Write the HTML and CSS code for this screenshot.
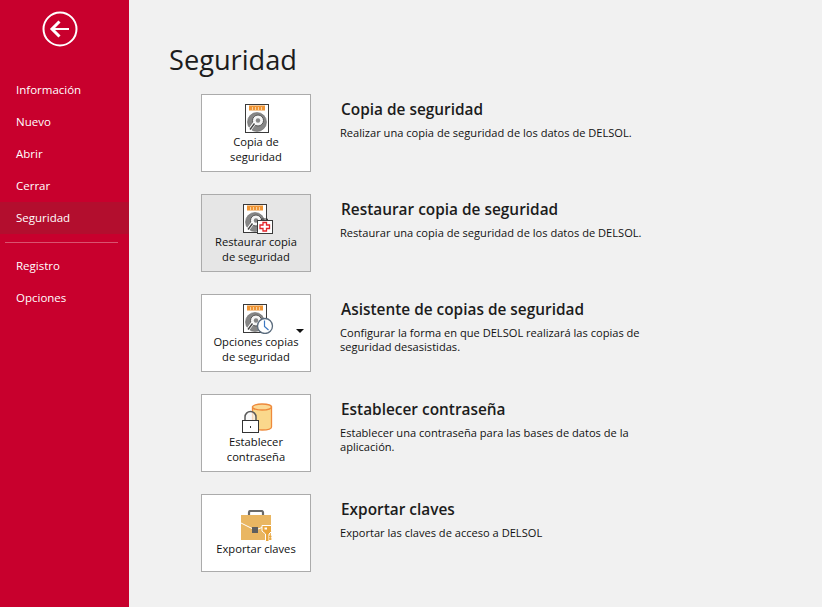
FILE: index.html
```html
<!DOCTYPE html>
<html lang="es">
<head>
    <meta charset="UTF-8">
    <title>Seguridad</title>
    <link rel="stylesheet" href="styles.css">
</head>
<body>
    <svg class="defs" width="0" height="0">
        <symbol id="disk" viewBox="0 0 24 29">
            <rect x="0.5" y="0.5" width="23" height="28" fill="#fff" stroke="#3a3a3a"/>
            <rect x="4" y="1.500" width="16" height="5" fill="#ef9535"/>
            <path d="M7.500 3v3M10.500 3v3M13.500 3v3M16.500 3v3" stroke="#f9cf9c" stroke-width="1"/>
            <circle cx="12" cy="18" r="9.500" fill="#868686" stroke="#6e6e6e" stroke-width="0.6"/>
            <circle cx="13" cy="16.500" r="5.500" fill="#f4f4f4" stroke="#555"/>
            <circle cx="13" cy="16.500" r="2.200" fill="#868686"/>
            <path d="M10 18.500L4.500 26" stroke="#fff" stroke-width="3.200"/>
            <path d="M9.500 19.500L5 25.500" stroke="#444" stroke-width="1.400"/>
        </symbol>
    </svg>
    <aside class="sidebar">
        <div class="back">
            <svg width="36" height="36" viewBox="0 0 36 36">
                <circle cx="18" cy="18" r="16.500" fill="none" stroke="#fff" stroke-width="2"/>
                <path d="M27 18H12" stroke="#fff" stroke-width="2"/>
                <path d="M17.500 10.500L10 18l7.500 7.500" fill="none" stroke="#fff" stroke-width="3"/>
            </svg>
        </div>
        <nav class="menu">
            <a class="menu-item">Información</a>
            <a class="menu-item">Nuevo</a>
            <a class="menu-item">Abrir</a>
            <a class="menu-item">Cerrar</a>
            <a class="menu-item active">Seguridad</a>
            <div class="menu-sep"></div>
            <a class="menu-item">Registro</a>
            <a class="menu-item">Opciones</a>
        </nav>
    </aside>
    <main class="content">
        <h1>Seguridad</h1>
        <div class="rows">
            <section class="row">
                <button class="tile">
                    <svg class="icon" width="36" height="31" viewBox="0 0 36 31"><use href="#disk" x="7" y="1" width="24" height="29"/></svg>
                    <span>Copia de<br>seguridad</span>
                </button>
                <div class="info">
                    <h2>Copia de seguridad</h2>
                    <p>Realizar una copia de seguridad de los datos de DELSOL.</p>
                </div>
            </section>
            <section class="row">
                <button class="tile hover">
                    <svg class="icon" width="36" height="31" viewBox="0 0 36 31">
                        <use href="#disk" x="5" y="1" width="24" height="29"/>
                        <path d="M23.500 18v-2h6v2" fill="none" stroke="#3a3a3a"/>
                        <rect x="19.500" y="17.500" width="15" height="13" fill="#fff" stroke="#3a3a3a"/>
                        <path d="M25 19.500h3.500v2.500h3v3.500h-3V28H25v-2.500h-3V22h3z" fill="#fff" stroke="#e3242b" stroke-width="1.300"/>
                    </svg>
                    <span>Restaurar copia<br>de seguridad</span>
                </button>
                <div class="info">
                    <h2>Restaurar copia de seguridad</h2>
                    <p>Restaurar una copia de seguridad de los datos de DELSOL.</p>
                </div>
            </section>
            <section class="row">
                <button class="tile">
                    <svg class="icon" width="36" height="31" viewBox="0 0 36 31">
                        <use href="#disk" x="5" y="1" width="24" height="29"/>
                        <circle cx="27" cy="23" r="7.500" fill="#fff" stroke="#5a6b7d" stroke-width="1.300"/>
                        <path d="M26.500 17.500V23.500L30.500 27" fill="none" stroke="#3b78c2" stroke-width="1.200"/>
                    </svg>
                    <span>Opciones copias<br>de seguridad</span>
                    <i class="caret"></i>
                </button>
                <div class="info">
                    <h2>Asistente de copias de seguridad</h2>
                    <p>Configurar la forma en que DELSOL realizará las copias de<br>seguridad desasistidas.</p>
                </div>
            </section>
            <section class="row">
                <button class="tile">
                    <svg class="icon" width="36" height="31" viewBox="0 0 36 31">
                        <path d="M14.500 4v20c0 1.800 3.500 3 9.500 3s9.500-1.200 9.500-3V4z" fill="#fad88c" stroke="#ee8a3c" stroke-width="1.300"/>
                        <ellipse cx="24" cy="4" rx="9.500" ry="3" fill="#fbd995" stroke="#ee8a3c" stroke-width="1.300"/>
                        <path d="M7 18v-4a5.500 5.500 0 0 1 11 0v4" fill="#f6f6f6" fill-opacity="0.7" stroke="#5a5a5a" stroke-width="1.500"/>
                        <rect x="4.500" y="17.500" width="16" height="12" fill="#fff" stroke="#333"/>
                        <rect x="12" y="23" width="1" height="2" fill="#333"/>
                    </svg>
                    <span>Establecer<br>contraseña</span>
                </button>
                <div class="info">
                    <h2>Establecer contraseña</h2>
                    <p>Establecer una contraseña para las bases de datos de la<br>aplicación.</p>
                </div>
            </section>
            <section class="row">
                <button class="tile single">
                    <svg class="icon" width="36" height="32" viewBox="0 0 36 32">
                        <path d="M11 5V2.500A1.500 1.500 0 0 1 12.500 1h11A1.500 1.500 0 0 1 25 2.500V5" fill="none" stroke="#6a6a6a" stroke-width="2.200"/>
                        <rect x="3" y="5" width="30" height="25" fill="#e9b662"/>
                        <path d="M3 13l11 5.500M20 19l4-1.500" stroke="#fff" stroke-width="1"/>
                        <rect x="14" y="17" width="6" height="6" fill="#5e5e5e"/>
                        <path d="M24 15.500h9.500v6L31 24v7.500h-3.500V24L24 21z" fill="#e9a53c" stroke="#fff"/>
                        <rect x="26.500" y="17.500" width="2.500" height="2" fill="#fff"/>
                        <path d="M31 26.500h2.500M31 29h2.500" stroke="#e9a53c" stroke-width="1.500"/>
                    </svg>
                    <span class="single-label">Exportar claves</span>
                </button>
                <div class="info">
                    <h2>Exportar claves</h2>
                    <p>Exportar las claves de acceso a DELSOL</p>
                </div>
            </section>
        </div>
    </main>
</body>
</html>
```

FILE: styles.css
```css
html, body {
    height: 100%;
}
body {
    margin: 0;
    display: flex;
    background-color: #f1f1f1;
    color: #111;
    font-family: 'Open Sans', 'Noto Sans', sans-serif;
    overflow: hidden;
}
.defs {
    position: absolute;
}
.sidebar {
    width: 129px;
    flex-shrink: 0;
    background-color: #c8002d;
    color: #fff;
}
.back {
    height: 74px;
    padding: 11px 0 0 42px;
    box-sizing: border-box;
}
.back svg {
    display: block;
}
.menu-item {
    display: block;
    height: 32px;
    line-height: 32px;
    padding-left: 16px;
    font-size: 11.5px;
}
.menu-item.active {
    background-color: #b30e2e;
}
.menu-sep {
    height: 1px;
    margin: 8px 11px 7px 5px;
    background-color: #d9536f;
}
.content {
    flex: 1;
    padding: 0 0 0 40px;
}
h1 {
    margin: 0;
    padding-top: 41px;
    height: 53px;
    font-size: 27.2px;
    line-height: 38px;
    font-weight: 400;
    color: #1c1c1c;
}
.rows {
    display: flex;
    flex-direction: column;
    gap: 22px;
    padding-left: 32px;
}
.row {
    display: flex;
    height: 78px;
}
.tile {
    position: relative;
    width: 110px;
    height: 78px;
    flex-shrink: 0;
    box-sizing: border-box;
    padding: 8px 0 0;
    display: flex;
    flex-direction: column;
    align-items: center;
    background-color: #fff;
    border: 1px solid #ababab;
    color: #111;
    font-family: inherit;
    font-size: 11.2px;
    line-height: 15px;
}
.tile.hover {
    background-color: #e6e6e6;
}
.tile.single {
    padding-top: 15px;
}
.single-label {
    margin-top: -1px;
}
.icon {
    display: block;
    flex-shrink: 0;
}
.caret {
    position: absolute;
    right: 6px;
    top: 34px;
    border-style: solid;
    border-width: 4px 4px 0;
    border-color: #111 transparent transparent;
}
.info {
    padding: 6px 0 0 29px;
}
h2 {
    margin: 0 0 6px 1px;
    font-size: 15.4px;
    line-height: 20px;
    font-weight: 600;
    color: #1c1c1c;
}
.info p {
    margin: 0;
    font-size: 11.1px;
    line-height: 14px;
}
```
